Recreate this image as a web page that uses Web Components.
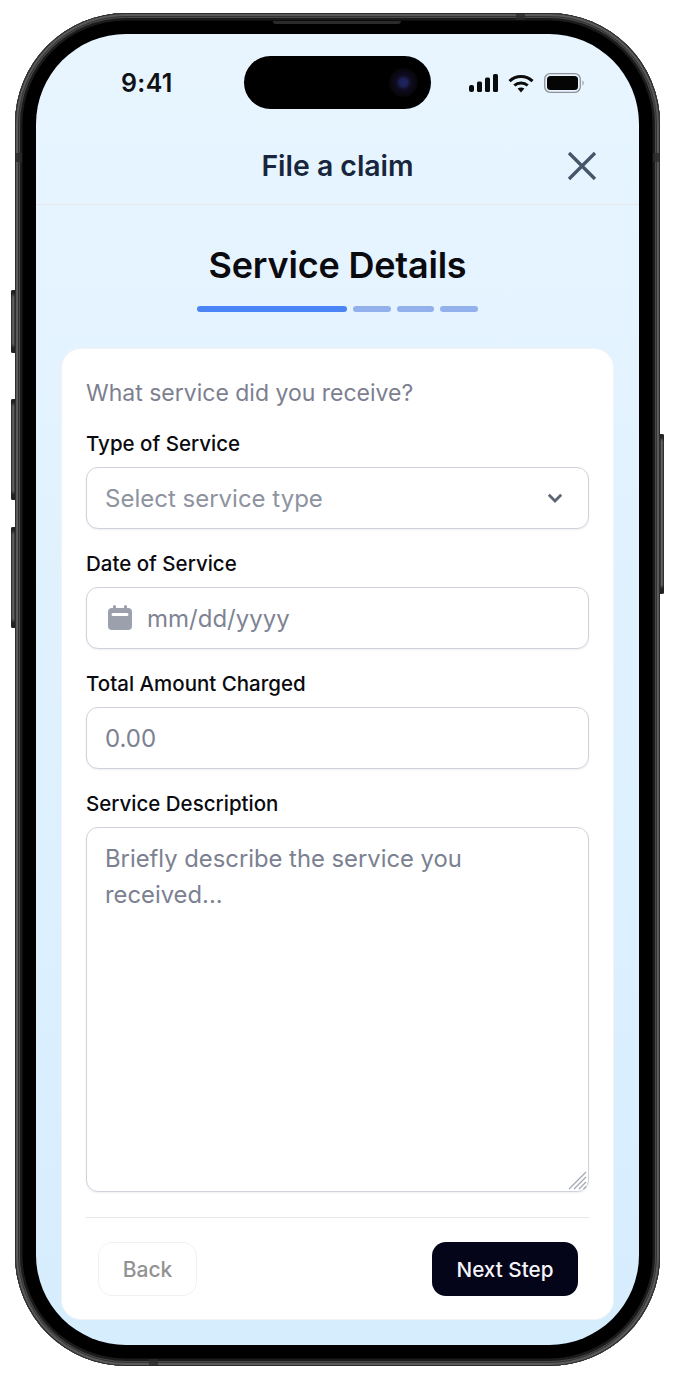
<!DOCTYPE html>
<html lang="en">
<head>
<meta charset="utf-8">
<title>File a claim</title>
<style>
html,body{margin:0;background:#fff}
body{font-family:Inter,"Liberation Sans",sans-serif;width:675px;height:1380px;overflow:hidden}
</style>
</head>
<body>
<phone-frame>
  <status-bar slot="status"></status-bar>
  <claim-header slot="header" heading="File a claim"></claim-header>
  <step-heading heading="Service Details"></step-heading>
  <claim-card>
    <p slot="intro">What service did you receive?</p>
    <form-field label="Type of Service">
      <fake-input kind="select" placeholder="Select service type"></fake-input>
    </form-field>
    <form-field label="Date of Service">
      <fake-input kind="date" placeholder="mm/dd/yyyy"></fake-input>
    </form-field>
    <form-field label="Total Amount Charged">
      <fake-input placeholder="0.00"></fake-input>
    </form-field>
    <form-field label="Service Description">
      <fake-input kind="area" placeholder="Briefly describe the service you received..."></fake-input>
    </form-field>
    <action-button slot="back" variant="ghost">Back</action-button>
    <action-button slot="next" variant="solid">Next Step</action-button>
  </claim-card>
</phone-frame>

<script>
function def(name, css, html, setup){
  customElements.define(name, class extends HTMLElement{
    constructor(){super();this.attachShadow({mode:'open'});}
    connectedCallback(){
      const a=n=>this.getAttribute(n)||'';
      this.shadowRoot.innerHTML='<style>'+css+'</style>'+(typeof html==='function'?html(a):html);
      if(setup)setup(this,a);
    }
  });
}

def('phone-frame',`
:host{display:block;box-sizing:border-box;position:relative;width:645px;height:1353px;margin:13px 0 0 15px;}
.body{box-sizing:border-box;width:100%;height:100%;padding:21px;border-radius:111px;background:#000;
  box-shadow:inset 0 0 0 1px #2c2c2c,inset 0 0 0 3px #5a5a5a,inset 0 0 0 4px #333,inset 0 0 0 5px #4a4a4a,inset 0 0 0 7.5px #1b1b1b;}
.screen{box-sizing:border-box;position:relative;width:100%;height:100%;border-radius:90px;overflow:hidden;
  display:flex;flex-direction:column;background:linear-gradient(180deg,#e8f5ff 0%,#d6edfe 100%);}
.island{position:absolute;left:208px;top:22px;width:187px;height:53px;border-radius:27px;background:#000;z-index:2;}
.lens{position:absolute;left:145px;top:12px;width:29px;height:29px;border-radius:50%;background:radial-gradient(circle,#1d2258 0 18%,#0e0c20 36%,#070509 70%,#000 100%);}
.btn{position:absolute;width:4.5px;background:linear-gradient(90deg,#333,#8d8d8d 55%,#4a4a4a);}
.l{left:-4.5px;border-radius:2px 0 0 2px;box-shadow:inset 0 5px 3px #222,inset 0 -7px 3px #222;}
.r{right:-4px;border-radius:0 2px 2px 0;background:linear-gradient(270deg,#333,#8d8d8d 55%,#4a4a4a);box-shadow:inset 0 5px 3px #222,inset 0 -7px 3px #222;}
.seam{position:absolute;background:rgba(42,42,42,.8);}
.slit{position:absolute;left:258px;top:8px;width:128px;height:3px;background:#2a2a2a;border-radius:0 0 3px 3px;}
`,`
<div class="btn l" style="top:277px;height:63px"></div>
<div class="btn l" style="top:386px;height:101px"></div>
<div class="btn l" style="top:514px;height:101px"></div>
<div class="btn r" style="top:421px;height:160px"></div>
<div class="body">
  <div class="screen">
    <div class="island"><div class="lens"></div></div>
    <slot name="status"></slot>
    <slot name="header"></slot>
    <slot></slot>
  </div>
</div>
<div class="slit"></div>
<div class="seam" style="left:0;top:140px;width:7px;height:9px"></div>
<div class="seam" style="right:0;top:140px;width:7px;height:9px"></div>
<div class="seam" style="left:134px;bottom:0;width:9px;height:7px"></div>
<div class="seam" style="right:135px;top:0;width:9px;height:7px"></div>`);

def('status-bar',`
:host{display:flex;align-items:center;justify-content:space-between;box-sizing:border-box;height:98px;padding:0 54px 0 85px;flex:none}
.t{font:600 25px/30px Inter,"Liberation Sans",sans-serif;color:#101114;letter-spacing:.35px}
.icons{display:flex;align-items:center;gap:10px}
svg{display:block}
`,`
<span class="t">9:41</span>
<div class="icons">
  <svg width="29" height="20" viewBox="0 0 29 20"><g fill="#0b0b0b"><rect x="0" y="12" width="5" height="7" rx="2"/><rect x="8" y="8.500" width="5" height="10.500" rx="1.500"/><rect x="16" y="4.500" width="5" height="14.500" rx="1.500"/><rect x="24" y="1" width="5" height="18" rx="1.500"/></g></svg>
  <svg width="26" height="19" viewBox="0 0 26 19"><g fill="none" stroke="#0b0b0b" stroke-width="3"><path d="M1.500 7.200C8 1 18 1 24.500 7.200"/><path d="M6.300 11.500C10 8 16 8 19.700 11.500"/></g><path d="M9.600 14.600C11.500 13 14.500 13 16.400 14.600L13 18.500Z" fill="#0b0b0b"/></svg>
  <svg width="41" height="20" viewBox="0 0 41 20"><rect x=".7" y=".7" width="35.600" height="18.600" rx="5.500" fill="none" stroke="#8e9196" stroke-width="1.300"/><rect x="3" y="3" width="31" height="14" rx="3.500" fill="#050505"/><path d="M38.500 7.500C40 8 40 12 38.500 12.500Z" fill="#8e9196"/></svg>
</div>`);

def('claim-header',`
:host{display:flex;align-items:center;justify-content:center;position:relative;box-sizing:border-box;height:73px;flex:none;border-bottom:1px solid #e6e7ec}
h1{margin:0;font:600 28.400px/34px Inter,"Liberation Sans",sans-serif;color:#17263c;padding-bottom:5px}
svg{position:absolute;right:41px;top:18px}
`,a=>`<h1>${a('heading')}</h1>
<svg width="32" height="32" viewBox="0 0 32 32"><path d="M3 3L29 29M29 3L3 29" fill="none" stroke="#475569" stroke-width="3.300"/></svg>`);

def('step-heading',`
:host{display:flex;flex-direction:column;align-items:center;flex:none;padding-top:35px}
h2{margin:0;font:600 36px/50px Inter,"Liberation Sans",sans-serif;color:#0a0a0f;letter-spacing:-.2px}
.bar{display:flex;gap:6px;margin-top:16px;height:6px;width:281px}
i{display:block;flex:1;border-radius:3px;background:#92b0ec}
i.on{flex:none;width:150px;background:#4b84f7}
`,a=>`<h2>${a('heading')}</h2><div class="bar"><i class="on"></i><i></i><i></i><i></i></div>`);

def('claim-card',`
:host{display:flex;flex-direction:column;box-sizing:border-box;flex:none;margin:36px 25px 0;width:553px;height:972px;padding:26px 24px 0 24px;background:#fff;border:1px solid #f1f4f7;border-radius:20px}
::slotted(p){margin:0 0 21px;font:400 23px/36px Inter,"Liberation Sans",sans-serif;color:#7d7f90}
.fields{display:flex;flex-direction:column;gap:23px}
.foot{display:flex;justify-content:space-between;align-items:center;margin-top:25px;padding:24px 11px 0 12px;border-top:1px solid #e5e7eb}
`,`
<slot name="intro"></slot>
<div class="fields"><slot></slot></div>
<div class="foot"><slot name="back"></slot><slot name="next"></slot></div>`);

def('form-field',`
:host{display:flex;flex-direction:column;gap:11px}
label{font:500 20.500px/24px Inter,"Liberation Sans",sans-serif;color:#0a0a0f;height:24px}
`,a=>`<label>${a('label')}</label><slot></slot>`);

def('fake-input',`
:host{display:flex;align-items:center;box-sizing:border-box;position:relative;height:62px;padding:0 18px;border:1.5px solid #cfd2dc;border-radius:12px;background:#fff;color:#8e93a0;font:400 24px/36px Inter,"Liberation Sans",sans-serif;box-shadow:0 1px 2px rgba(20,30,60,.07)}
:host([kind=area]){height:365px;align-items:flex-start;padding-top:13px;font-size:23.800px}
:host([kind=date]){gap:14px;color:#7f8494}
.p{flex:1;padding-top:2px}
:host([kind=area]) .p{color:#7b8191;padding-top:0}
:host(:not([kind])) .p{color:#7b8191}
svg{display:block;flex:none}
.grip{position:absolute;right:1px;bottom:1px}
`,a=>{
  const k=a('kind');let before='',after='';
  if(k==='date')before=`<svg width="26" height="26" viewBox="0 0 26 26" style="margin-left:2px"><path fill-rule="evenodd" fill="#9ca0ad" d="M6 1.500a1.500 1.500 0 0 1 3 0V3h8V1.500a1.500 1.500 0 0 1 3 0V3h1a4 4 0 0 1 4 4v14a4 4 0 0 1-4 4H5a4 4 0 0 1-4-4V7a4 4 0 0 1 4-4h1ZM6 8a1.500 1.500 0 0 0 0 3h14a1.500 1.500 0 0 0 0-3Z"/></svg>`;
  if(k==='select')after=`<svg width="16" height="10" viewBox="0 0 16 10" style="margin-right:7px"><path d="M1.800 1.800L8 8L14.200 1.800" fill="none" stroke="#5d6474" stroke-width="2.800"/></svg>`;
  if(k==='area')after=`<svg class="grip" width="19" height="19" viewBox="0 0 19 19"><path d="M1 18L18 1M6 18L18 6M11 18L18 11M15.500 18L18 15.500" stroke="#a4a8b5" stroke-width="1.300" fill="none"/></svg>`;
  return before+`<span class="p">${a('placeholder')}</span>`+after;
});

def('action-button',`
:host{display:flex;align-items:center;justify-content:center;box-sizing:border-box;height:54px;padding-top:1px;border-radius:14px;font:500 21px/26px Inter,"Liberation Sans",sans-serif}
:host([variant=ghost]){width:99px;border:1.500px solid #f0f1f4;color:#929292;background:#fff}
:host([variant=solid]){width:146px;background:#05051a;color:#f6f6fa;font-size:20.700px}
`,`<slot></slot>`);
</script>
</body>
</html>
